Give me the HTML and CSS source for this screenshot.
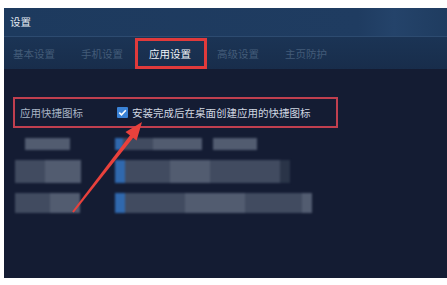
FILE: index.html
```html
<!DOCTYPE html>
<html lang="zh">
<head>
<meta charset="utf-8">
<title>设置</title>
<link rel="stylesheet" href="styles.css">
</head>
<body>
<div class="window">
  <div class="titlebar">设置</div>
  <div class="tabs">
    <div class="tab">基本设置</div>
    <div class="tab">手机设置</div>
    <div class="tab active">应用设置</div>
    <div class="tab">高级设置</div>
    <div class="tab">主页防护</div>
  </div>
  <div class="content">
    <div class="option highlight">
      <div class="label">应用快捷图标</div>
      <label class="check">
        <span class="box"><svg viewBox="0 0 11 11" width="11" height="11"><path d="M2.3 5.6 L4.5 7.8 L8.8 3.2" fill="none" stroke="#fff" stroke-width="1.6"/></svg></span>
        <span class="check-text">安装完成后在桌面创建应用的快捷图标</span>
      </label>
    </div>
    <div class="blur-row r2">
      <div class="bl-label"><i class="g1" style="width:45px"></i></div>
      <div class="bl-value"><i class="b1" style="width:8px"></i><i class="g2" style="width:30px"></i><i class="g1" style="width:49px"></i><i class="sp" style="width:11px"></i><i class="g1" style="width:44px"></i></div>
    </div>
    <div class="blur-row r3">
      <div class="bl-label"><i class="g2" style="width:30px"></i><i class="g1" style="width:36px"></i></div>
      <div class="bl-value"><i class="b1" style="width:10px"></i><i class="g2" style="width:45px"></i><i class="g1" style="width:40px"></i><i class="g2" style="width:70px"></i><i class="g4" style="width:10px"></i></div>
    </div>
    <div class="blur-row r4">
      <div class="bl-label"><i class="g2" style="width:35px"></i><i class="g1" style="width:30px"></i></div>
      <div class="bl-value"><i class="b1" style="width:10px"></i><i class="g2" style="width:60px"></i><i class="g1" style="width:60px"></i><i class="g2" style="width:57px"></i><i class="g1" style="width:10px"></i></div>
    </div>
  </div>
</div>
<svg class="arrow" width="447" height="285" viewBox="0 0 447 285">
  <polygon points="72.2,211.6 73.8,212.4 133.6,137.2 130.4,134.8" fill="#e8413c"/>
  <polygon points="142,122 125.5,132 136.6,140.6" fill="#e8413c"/>
</svg>
</body>
</html>
```

FILE: styles.css
```css
html, body {
  margin: 0;
  padding: 0;
  background: #ffffff;
}
body {
  position: relative;
  width: 447px;
  height: 285px;
  overflow: hidden;
  font-family: "Noto Sans CJK SC", "Noto Sans", sans-serif;
}
.window {
  margin: 8px 0 0 4px;
  width: 443px;
  height: 270px;
  background: #131b31;
  display: flex;
  flex-direction: column;
}
.titlebar {
  height: 28px;
  line-height: 28px;
  padding-left: 6px;
  font-size: 10.5px;
  color: #e4ebf3;
  background: linear-gradient(90deg, #1d3a5e 0%, #1f3c61 80%, #24436a 88%, #1f3c60 100%);
}
.tabs {
  height: 32px;
  border-top: 1px solid #2d4b70;
  background: linear-gradient(180deg, #1b3455 0%, #182d4b 100%);
  display: flex;
  align-items: center;
  gap: 6px;
}
.tab {
  padding: 0 9px;
  width: 44px;
  line-height: 21px;
  font-size: 10.5px;
  color: #435c79;
}
.tab.active {
  color: #eef3f8;
  outline: 3px solid #e03a3b;
  outline-offset: 2px;
}
.content {
  flex: 1;
  padding: 28px 0 0 9px;
  background: #141c33;
}
.option {
  display: grid;
  grid-template-columns: 97px auto;
  align-items: center;
  width: 312px;
  height: 27px;
  padding: 0 4px 0 5px;
  border: 2px solid #c03f4f;
  font-size: 10.5px;
}
.label {
  color: #a9b5c6;
}
.check {
  display: flex;
  align-items: center;
  gap: 4px;
  color: #d0d7e1;
}
.box {
  width: 11px;
  height: 11px;
  background: #3a82d6;
  border-radius: 1px;
  display: block;
}
.box svg {
  display: block;
}
.blur-row {
  display: grid;
  grid-template-columns: 100px auto;
  margin-left: 2px;
  filter: blur(1px);
}
.blur-row i {
  display: block;
  height: 100%;
}
.bl-label, .bl-value {
  display: flex;
}
.r2 { height: 12px; margin-top: 10px; }
.r2 .bl-label { padding-left: 10px; }
.r3 { height: 23px; margin-top: 10px; }
.r4 { height: 20px; margin-top: 10px; }
.g1 { background: #525c70; }
.g2 { background: #414b60; }
.g3 { background: #343e52; }
.g4 { background: #2a3448; }
.b1 { background: #3068ad; }
.sp { background: transparent; }
.arrow {
  position: absolute;
  left: 0;
  top: 0;
  pointer-events: none;
}
```
